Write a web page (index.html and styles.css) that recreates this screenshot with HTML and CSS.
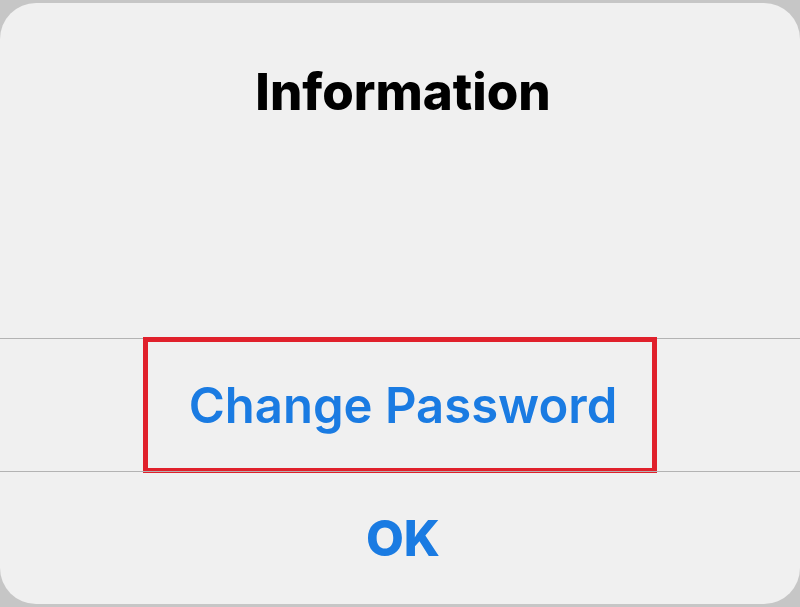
FILE: index.html
```html
<!DOCTYPE html>
<html lang="en">
<head>
    <meta charset="UTF-8">
    <meta name="viewport" content="width=device-width, initial-scale=1.0">
    <title>Information</title>
    <link rel="stylesheet" href="styles.css">
</head>
<body>
    <div class="alert">
        <div class="alert-body">
            <h1>Information</h1>
        </div>
        <div class="alert-action">
            <span class="highlight"></span>
            <button class="action-btn">Change Password</button>
        </div>
        <div class="alert-action">
            <button class="action-btn bold">OK</button>
        </div>
    </div>
</body>
</html>
```

FILE: styles.css
```css
body {
    margin: 0;
    background-color: #c6c6c6;
    font-family: Inter, "Noto Sans", sans-serif;
}
.alert {
    margin: 3px 0;
    height: 601px;
    background-color: #f0f0f0;
    border-radius: 36px;
    display: flex;
    flex-direction: column;
    overflow: hidden;
}
.alert-body {
    height: 336px;
    padding-left: 6px;
    display: flex;
    justify-content: center;
}
h1 {
    margin: 0;
    padding-top: 57px;
    font-size: 51px;
    font-weight: 800;
    color: #000;
    line-height: 64px;
}
.alert-action {
    position: relative;
    height: 132px;
    padding-left: 6px;
    border-top: 1px solid #b3b3b3;
    display: flex;
    justify-content: center;
    align-items: center;
}
.action-btn {
    background: none;
    border: none;
    font-family: inherit;
    font-size: 49px;
    font-weight: 600;
    color: #1a7be2;
    padding: 0;
}
.action-btn.bold {
    font-weight: 800;
}
.highlight {
    position: absolute;
    top: -2px;
    left: 143px;
    width: 504px;
    height: 126px;
    border: 5px solid #e0202b;
}
```
